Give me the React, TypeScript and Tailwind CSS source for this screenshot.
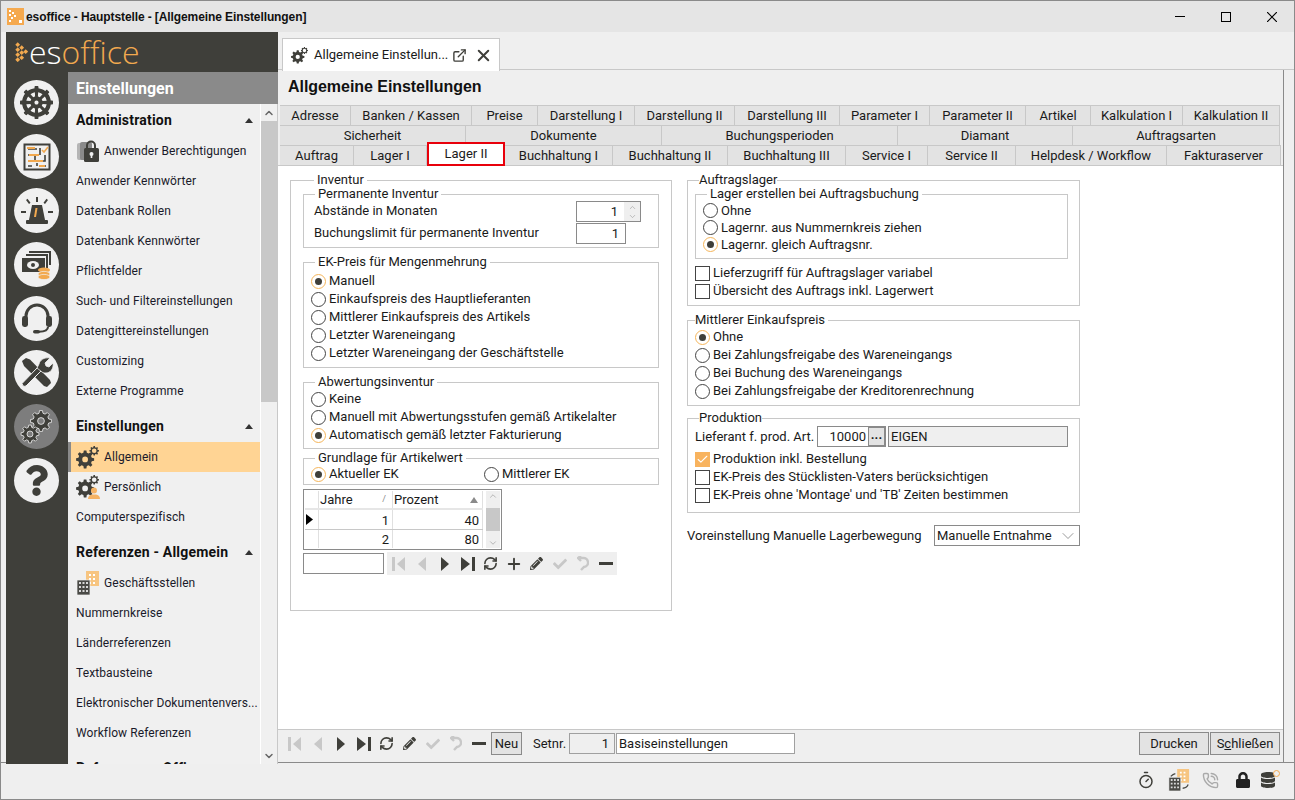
import { ReactNode } from "react";
import { Check, ChevronDown, ChevronUp, ExternalLink, PhoneCall, Plus, RefreshCw, Timer, X } from "lucide-react";
import { FaDatabase, FaDharmachakra, FaLock, FaPencilAlt, FaQuestion, FaCheck } from "react-icons/fa";

const DARK = "#3f3f3a";

// Zahnrad als Pfad, Zähne werden gerechnet
function gearPath(cx: number, cy: number, r: number, teeth: number, hole: number) {
  const pts: string[] = [];
  const inner = r * 0.76;
  const step = (Math.PI * 2) / teeth;
  for (let i = 0; i < teeth; i++) {
    const a = i * step;
    const p = (rad: number, ang: number) => `${(cx + rad * Math.cos(ang)).toFixed(2)} ${(cy + rad * Math.sin(ang)).toFixed(2)}`;
    pts.push(`${i === 0 ? "M" : "L"}${p(inner, a - step * 0.32)}`);
    pts.push(`L${p(r, a - step * 0.18)}`);
    pts.push(`L${p(r, a + step * 0.18)}`);
    pts.push(`L${p(inner, a + step * 0.32)}`);
  }
  pts.push("Z");
  pts.push(`M${cx + hole} ${cy}a${hole} ${hole} 0 1 0 ${-hole * 2} 0a${hole} ${hole} 0 1 0 ${hole * 2} 0Z`);
  return pts.join("");
}

function GearPair({ size, color = DARK }: { size: number; color?: string }) {
  return (
    <svg width={size} height={size} viewBox="0 0 24 24">
      <path d={gearPath(9.5, 14, 9.5, 8, 3)} fill={color} fillRule="evenodd" />
      <path d={gearPath(19, 5, 5, 8, 2.4)} fill={color} fillRule="evenodd" />
    </svg>
  );
}

function ActiveGears() {
  return (
    <svg width="34" height="34" viewBox="0 0 34 34">
      <path d={gearPath(21, 11, 10.5, 8, 3.4)} fill={DARK} stroke="#f0f0f0" strokeWidth="0.8" fillRule="evenodd" />
      <path d={gearPath(10, 24, 9, 8, 3)} fill={DARK} stroke="#f0f0f0" strokeWidth="0.8" fillRule="evenodd" />
    </svg>
  );
}

function WindowIcon() {
  return (
    <div className="w-[17px] h-[17px] bg-[#f5a94e] flex items-center justify-center">
      <svg width="15" height="15" viewBox="0 0 15 15" fill="#fff">
        <rect x="1" y="1" width="2" height="2" />
        <rect x="4" y="3" width="2" height="2" />
        <rect x="1" y="5" width="2" height="2" />
        <rect x="6" y="6" width="2" height="2" />
        <rect x="3" y="8" width="2" height="2" />
        <rect x="1" y="11" width="2" height="2" />
        <rect x="11" y="11" width="3" height="3" />
      </svg>
    </div>
  );
}

function LogoMark() {
  return (
    <svg width="13" height="20" viewBox="0 0 13 20" fill="#f2a94f">
      {[[1, 1], [1, 6], [5, 4], [9, 8], [5, 9], [1, 11], [5, 14], [1, 16]].map(([x, y], i) => (
        <rect key={i} x={x} y={y} width="3.4" height="3.4" transform={`rotate(45 ${x + 1.7} ${y + 1.7})`} />
      ))}
    </svg>
  );
}

function PlanIcon() {
  return (
    <svg width="28" height="28" viewBox="0 0 28 28">
      <rect x="1.5" y="1.5" width="25" height="25" fill="none" stroke={DARK} strokeWidth="2" />
      <path d="M5 6h9M5 12h7v6M12 18H5M5 23h4M17 5v7M22 12v6H16M20 23h3M14 23v-3" stroke={DARK} strokeWidth="1.6" fill="none" />
      <path d="M4 5h8M6 12h10M5 18h15M16 23h6" stroke="#f2a94f" strokeWidth="2" fill="none" />
      <path d="M19 7l2 2 4-5" stroke="#f2a94f" strokeWidth="1.6" fill="none" />
    </svg>
  );
}

function SirenIcon() {
  return (
    <svg width="32" height="30" viewBox="0 0 32 30" fill={DARK}>
      <path d="M11 9h10l3 15H8z" />
      <path d="M14.5 12h2l-1.5 9h-2z" fill="#f2a94f" />
      <rect x="5" y="24" width="22" height="4" rx="1" />
      <path d="M15 1h2v5h-2zM5 4l1.5-1.2 3 4L8 8zM27 4l-1.5-1.2-3 4L24 8zM0 15h5v2H0zM27 15h5v2h-5z" />
    </svg>
  );
}

function MoneyIcon() {
  return (
    <svg width="32" height="30" viewBox="0 0 32 30">
      <path d="M8 1h22v14h-2V3H8zM5 4h22v14h-2V6H5z" fill={DARK} />
      <rect x="1" y="8" width="23" height="14" fill={DARK} />
      <ellipse cx="12" cy="15" rx="6" ry="4" fill="#f0f0f0" />
      <circle cx="12" cy="15" r="2" fill={DARK} />
      <ellipse cx="23" cy="20" rx="6" ry="2.6" fill="#f2a94f" />
      <ellipse cx="23" cy="24" rx="6" ry="2.6" fill="#f2a94f" stroke="#f0f0f0" strokeWidth="0.7" />
      <ellipse cx="23" cy="27" rx="6" ry="2.6" fill="#f2a94f" stroke="#f0f0f0" strokeWidth="0.7" />
    </svg>
  );
}

function HeadsetIcon() {
  return (
    <svg width="32" height="32" viewBox="0 0 32 32" fill="none">
      <path d="M5 16v-3a11 11 0 0 1 22 0v3" stroke={DARK} strokeWidth="3" />
      <rect x="1" y="13" width="6" height="11" rx="2.4" fill={DARK} />
      <rect x="25" y="13" width="6" height="11" rx="2.4" fill={DARK} />
      <path d="M27 24c0 3-3 4.6-9 4.8" stroke={DARK} strokeWidth="2" />
      <rect x="12" y="27" width="7" height="3.6" rx="1.8" fill={DARK} />
    </svg>
  );
}

function ToolsIcon() {
  return (
    <svg width="34" height="34" viewBox="0 0 34 34" fill={DARK}>
      <path d="M2 5l4-3 4 1.500L30 24l1 3-4 4-3-1L4 10z" />
      <path d="M22 14L6 30a2.500 2.500 0 0 1-3.500-1l-.5-1.500L18 11z" stroke="#f0f0f0" strokeWidth="1" />
      <path d="M19 8c1-4 5-7 11-6l-5 5 1 3 3 1 4-4c1 6-3 10-7 10-2 0-3.500-.5-4-1l-5-4c.5-1 1.500-3 2-4z" stroke="#f0f0f0" strokeWidth="0.8" />
    </svg>
  );
}

function RoundButton({ active, children }: { active?: boolean; children: ReactNode }) {
  return (
    <div className={active ? "w-[45px] h-[45px] rounded-full bg-[#7d7d7d] flex items-center justify-center" : "w-[45px] h-[45px] rounded-full bg-[#f0f0f0] flex items-center justify-center"}>
      {children}
    </div>
  );
}

function LockStack() {
  return (
    <svg width="24" height="24" viewBox="0 0 24 24">
      <rect x="1" y="4" width="12" height="17" rx="2" fill="#b5b5b5" />
      <rect x="4" y="3" width="12" height="18" rx="2" fill="#8a8a8a" />
      <path d="M12 8V5.500a4 4 0 0 1 8 0V8" fill="none" stroke={DARK} strokeWidth="2" transform="translate(-1 1)" />
      <rect x="8" y="9" width="15" height="14" rx="1.500" fill={DARK} />
      <circle cx="15.500" cy="15" r="2" fill="#f0f0f0" />
      <rect x="14.700" y="15" width="1.600" height="4" fill="#f0f0f0" />
    </svg>
  );
}

function GearPerson() {
  return (
    <div className="relative w-[24px] h-[24px]">
      <GearPair size={23} />
      <svg className="absolute right-[-1px] bottom-0" width="14" height="12" viewBox="0 0 14 12" fill="#f5b263">
        <circle cx="7" cy="3.400" r="3" />
        <path d="M1 12c0-3 2-4 4-4.500h4c2 .5 4 1.500 4 4.500z" />
      </svg>
    </div>
  );
}

function Buildings({ small }: { small?: boolean }) {
  return (
    <svg width={small ? 22 : 24} height={small ? 22 : 24} viewBox="0 0 24 24">
      <rect x="10" y="0" width="13" height="15" fill="#f7c581" />
      <path d="M13 3h2v2h-2zM17 3h2v2h-2zM13 7h2v2h-2zM17 7h2v2h-2zM13 11h2v2h-2zM17 11h2v2h-2z" fill="#fff" />
      <rect x="1" y="9" width="13" height="15" fill="#4a4a46" stroke="#f0f0f0" strokeWidth="0.7" />
      <path d="M3 11h2v2H3zM6.500 11h2v2h-2zM10 11h2v2h-2zM3 15h2v2H3zM6.500 15h2v2h-2zM10 15h2v2h-2zM3 19h2v2H3zM6.500 19h2v2h-2zM10 19h2v2h-2z" fill="#d8d8d8" />
      {small && <path d="M16 21c3 0 5-1.500 6-4M8 5c-2 .5-4 2-5 3" fill="none" stroke="#4a4a46" strokeWidth="1.400" />}
    </svg>
  );
}

function MenuItem({ label, icon, active }: { label: string; icon?: ReactNode; active?: boolean }) {
  return (
    <div className={active ? "h-[30px] flex items-center bg-[#ffd494] border-l-[3px] border-[#8a8a8a] pl-[5px]" : "h-[30px] flex items-center pl-[8px]"}>
      {icon && <div className="w-[28px] flex items-center">{icon}</div>}
      <span className="text-[12px] text-[#1a1a2a] whitespace-nowrap tracking-[0.1px]">{label}</span>
    </div>
  );
}

function MenuSection({ label, top }: { label: string; top?: boolean }) {
  return (
    <div className={top ? "h-[32px] flex items-center justify-between pl-[8px] pr-[7px]" : "h-[32px] mt-[4px] flex items-center justify-between pl-[8px] pr-[7px]"}>
      <span className="text-[14px] font-bold text-[#111] whitespace-nowrap tracking-[0.2px]">{label}</span>
      <svg width="8" height="5" viewBox="0 0 8 5" fill="#333"><polygon points="4,0 8,5 0,5" /></svg>
    </div>
  );
}

function Sidebar() {
  return (
    <aside className="relative z-10 -mb-[2px] w-[272px] shrink-0 bg-[#3f3f3a] flex flex-col">
      <div className="h-[40px] flex items-center pl-[9px] gap-[1px]">
        <LogoMark />
        <span className="text-[32px] font-light leading-none [font-family:'Open_Sans',sans-serif]">
          <span className="text-white">es</span>
          <span className="text-[#f2a94f]">office</span>
        </span>
      </div>
      <div className="flex flex-1 min-h-0">
        <div className="w-[62px] shrink-0 pl-[8px] pt-[8px] flex flex-col gap-[9px]">
          <RoundButton><FaDharmachakra size={33} color={DARK} /></RoundButton>
          <RoundButton><PlanIcon /></RoundButton>
          <RoundButton><SirenIcon /></RoundButton>
          <RoundButton><MoneyIcon /></RoundButton>
          <RoundButton><HeadsetIcon /></RoundButton>
          <RoundButton><ToolsIcon /></RoundButton>
          <RoundButton active><ActiveGears /></RoundButton>
          <RoundButton><FaQuestion size={31} color={DARK} /></RoundButton>
        </div>
        <div className="flex-1 flex flex-col min-w-0">
          <div className="h-[32px] bg-[#8a8a8a] flex items-center pl-[8px] pt-[1px] text-[16px] font-bold text-white">Einstellungen</div>
          <div className="flex-1 min-h-0 flex bg-[#f0f0f0] border-r border-[#c8c8c8]">
            <div className="w-[193px] border-r border-white overflow-hidden">
              <MenuSection top label="Administration" />
              <MenuItem label="Anwender Berechtigungen" icon={<LockStack />} />
              <MenuItem label="Anwender Kennwörter" />
              <MenuItem label="Datenbank Rollen" />
              <MenuItem label="Datenbank Kennwörter" />
              <MenuItem label="Pflichtfelder" />
              <MenuItem label="Such- und Filtereinstellungen" />
              <MenuItem label="Datengittereinstellungen" />
              <MenuItem label="Customizing" />
              <MenuItem label="Externe Programme" />
              <MenuSection label="Einstellungen" />
              <MenuItem active label="Allgemein" icon={<GearPair size={23} />} />
              <MenuItem label="Persönlich" icon={<GearPerson />} />
              <MenuItem label="Computerspezifisch" />
              <MenuSection label="Referenzen - Allgemein" />
              <MenuItem label="Geschäftsstellen" icon={<Buildings />} />
              <MenuItem label="Nummernkreise" />
              <MenuItem label="Länderreferenzen" />
              <MenuItem label="Textbausteine" />
              <MenuItem label="Elektronischer Dokumentenvers..." />
              <MenuItem label="Workflow Referenzen" />
              <MenuSection label="Referenzen - Office" />
            </div>
            <div className="w-[16px] flex flex-col items-center">
              <div className="h-[17px] flex items-center"><ChevronUp size={12} strokeWidth={3} color="#666" /></div>
              <div className="w-[16px] h-[281px] bg-[#c8c8c8]" />
              <div className="flex-1" />
              <div className="h-[17px] flex items-center"><ChevronDown size={12} strokeWidth={3} color="#666" /></div>
            </div>
          </div>
        </div>
      </div>
    </aside>
  );
}

type Tab = { label: string; w: string; selected?: boolean };

const tabRows: Tab[][] = [
  [
    { label: "Adresse", w: "w-[71px]" },
    { label: "Banken / Kassen", w: "w-[121px]" },
    { label: "Preise", w: "w-[66px]" },
    { label: "Darstellung I", w: "w-[97px]" },
    { label: "Darstellung II", w: "w-[100px]" },
    { label: "Darstellung III", w: "w-[105px]" },
    { label: "Parameter I", w: "w-[90px]" },
    { label: "Parameter II", w: "w-[96px]" },
    { label: "Artikel", w: "w-[65px]" },
    { label: "Kalkulation I", w: "w-[92px]" },
    { label: "Kalkulation II", w: "w-[97px]" },
  ],
  [
    { label: "Sicherheit", w: "w-[186px]" },
    { label: "Dokumente", w: "w-[196px]" },
    { label: "Buchungsperioden", w: "w-[236px]" },
    { label: "Diamant", w: "w-[175px]" },
    { label: "Auftragsarten", w: "w-[207px]" },
  ],
  [
    { label: "Auftrag", w: "w-[74px]" },
    { label: "Lager I", w: "w-[73px]" },
    { label: "Lager II", w: "w-[78px]", selected: true },
    { label: "Buchhaltung I", w: "w-[108px]" },
    { label: "Buchhaltung II", w: "w-[115px]" },
    { label: "Buchhaltung III", w: "w-[118px]" },
    { label: "Service I", w: "w-[82px]" },
    { label: "Service II", w: "w-[88px]" },
    { label: "Helpdesk / Workflow", w: "w-[151px]" },
    { label: "Fakturaserver", w: "w-[114px]" },
  ],
];

function TabRows() {
  return (
    <div className="pl-[2px] pr-[2px]">
      {tabRows.map((row, i) => (
        <div key={i} className="flex h-[20px]">
          {row.map((t) =>
            t.selected ? (
              <div key={t.label} className={`${t.w} relative z-10 h-[24px] -mt-[3px] bg-white border-2 border-[#e8000b] flex items-center justify-center text-[13px] text-[#1a1a1a]`}>
                {t.label}
              </div>
            ) : (
              <div key={t.label} className={`${t.w} bg-[#e3e3e3] border-t border-r border-[#c8c8c8] flex items-center justify-center text-[13px] text-[#1a1a1a] whitespace-nowrap`}>
                {t.label}
              </div>
            )
          )}
        </div>
      ))}
    </div>
  );
}

function Group({ title, className, legendClass, children }: { title: string; className?: string; legendClass?: string; children: ReactNode }) {
  return (
    <fieldset className={`border border-[#c8c8c8] min-w-0 ${className ?? ""}`}>
      <legend className={`leading-[14px] text-[13px] text-[#1a1a1a] whitespace-nowrap ${legendClass ?? "ml-[11px] px-[3px]"}`}>{title}</legend>
      {children}
    </fieldset>
  );
}

function Radio({ label, on, rowClass }: { label: string; on?: boolean; rowClass?: string }) {
  return (
    <div className={`flex items-center gap-[3px] text-[13px] text-[#1a1a1a] whitespace-nowrap ${rowClass ?? "h-[18px]"}`}>
      {on ? (
        <span className="w-[15px] h-[15px] rounded-full border border-[#f5b55a] bg-white flex items-center justify-center">
          <span className="w-[7px] h-[7px] rounded-full bg-[#3f3f3a]" />
        </span>
      ) : (
        <span className="w-[15px] h-[15px] rounded-full border border-[#444] bg-white" />
      )}
      {label}
    </div>
  );
}

function CheckRow({ label, on }: { label: string; on?: boolean }) {
  return (
    <div className="h-[18px] flex items-center gap-[3px] text-[13px] text-[#1a1a1a] whitespace-nowrap">
      {on ? (
        <span className="w-[15px] h-[15px] bg-[#f8b35e] flex items-center justify-center">
          <Check size={13} color="#fff" strokeWidth={2} />
        </span>
      ) : (
        <span className="w-[15px] h-[15px] border border-[#444] bg-white" />
      )}
      {label}
    </div>
  );
}

function NavIcon({ kind, off }: { kind: string; off?: boolean }) {
  const c = off ? "#c8c8c8" : DARK;
  return (
    <div className="w-[23px] h-[22px] flex items-center justify-center">
      {kind === "first" && <svg width="14" height="14" viewBox="0 0 14 14" fill={c}><rect x="0" y="0" width="3" height="14" /><polygon points="13,0 13,14 5,7" /></svg>}
      {kind === "prev" && <svg width="8" height="14" viewBox="0 0 8 14" fill={c}><polygon points="8,0 8,14 0,7" /></svg>}
      {kind === "next" && <svg width="8" height="14" viewBox="0 0 8 14" fill={c}><polygon points="0,0 8,7 0,14" /></svg>}
      {kind === "last" && <svg width="14" height="14" viewBox="0 0 14 14" fill={c}><polygon points="0,0 9,7 0,14" /><rect x="11" y="0" width="3" height="14" /></svg>}
      {kind === "refresh" && <RefreshCw size={15} strokeWidth={2.6} color={c} />}
      {kind === "plus" && <Plus size={18} strokeWidth={2.5} color={c} />}
      {kind === "edit" && <FaPencilAlt size={13} color={c} />}
      {kind === "check" && <FaCheck size={14} color={c} />}
      {kind === "undo" && <svg width="12" height="15" viewBox="0 0 12 15" fill="none" stroke={c} strokeWidth="2.400"><path d="M1 2h5a4.500 4.500 0 0 1 1 9l-3 3" /><path d="M4 0L1 2l3 3" /></svg>}
      {kind === "minus" && <svg width="14" height="3" viewBox="0 0 14 3" fill={c}><rect width="14" height="3" /></svg>}
    </div>
  );
}

function Inventur() {
  return (
    <Group title="Inventur" className="w-[382px] h-[438px] shrink-0 px-[12px]">
      <Group title="Permanente Inventur">
        <div className="pb-[3px] pl-[10px] pr-[17px]">
          <div className="flex items-center justify-between h-[21px] text-[13px] text-[#1a1a1a]">
            <span className="-mt-[2px]">Abstände in Monaten</span>
            <div className="w-[65px] h-[21px] border border-[#8a8a8a] flex items-center">
              <span className="flex-1 text-right pr-[6px]">1</span>
              <div className="w-[16px] h-full bg-[#efefef] flex flex-col items-center justify-center">
                <ChevronUp size={9} color="#aaa" />
                <ChevronDown size={9} color="#aaa" />
              </div>
            </div>
          </div>
          <div className="flex items-center justify-between h-[21px] mt-[1px] text-[13px] text-[#1a1a1a]">
            <span className="-mt-[2px]">Buchungslimit für permanente Inventur</span>
            <div className="flex w-[65px]">
              <div className="w-[50px] h-[21px] border border-[#8a8a8a] text-right pr-[6px] leading-[19px]">1</div>
            </div>
          </div>
        </div>
      </Group>
      <Group title="EK-Preis für Mengenmehrung" className="mt-[7px]">
        <div className="pt-[3px] pb-[5px] pl-[7px]">
          <Radio on label="Manuell" />
          <Radio label="Einkaufspreis des Hauptlieferanten" />
          <Radio label="Mittlerer Einkaufspreis des Artikels" />
          <Radio label="Letzter Wareneingang" />
          <Radio label="Letzter Wareneingang der Geschäftstelle" />
        </div>
      </Group>
      <Group title="Abwertungsinventur" className="mt-[7px]">
        <div className="pt-[1px] pb-[4px] pl-[7px]">
          <Radio label="Keine" />
          <Radio label="Manuell mit Abwertungsstufen gemäß Artikelalter" />
          <Radio on label="Automatisch gemäß letzter Fakturierung" />
        </div>
      </Group>
      <Group title="Grundlage für Artikelwert" className="mt-[2px]">
        <div className="flex pl-[7px] pb-[1px]">
          <div className="w-[173px]"><Radio on label="Aktueller EK" /></div>
          <Radio label="Mittlerer EK" />
        </div>
      </Group>
      <div className="mt-[4px] w-[199px] h-[61px] border border-[#8a8a8a] flex text-[13px] text-[#1a1a1a] p-[1px]">
        <div className="w-[178px]">
          <div className="flex h-[19px] border-b-2 border-[#e6e6e6]">
            <div className="w-[13px]" />
            <div className="w-[75px] border-x border-[#e0e0e0] pl-[1px] flex items-center justify-between pr-[6px]">Jahre<span className="text-[9px] text-[#888]">/</span></div>
            <div className="w-[90px] border-r border-[#e0e0e0] pl-[1px] flex items-center justify-between pr-[4px]">
              Prozent
              <svg width="8" height="6" viewBox="0 0 8 6" fill="#8a8a8a"><polygon points="4,0 8,6 0,6" /></svg>
            </div>
          </div>
          <div className="flex h-[20px] border-b border-[#c8c8c8]">
            <div className="w-[13px] flex items-center pl-[1px]">
              <svg width="7" height="11" viewBox="0 0 7 11" fill="#000"><polygon points="0,0 7,5.500 0,11" /></svg>
            </div>
            <div className="w-[75px] border-x border-[#e0e0e0] text-right pr-[3px] leading-[21px]">1</div>
            <div className="w-[90px] border-r border-[#e0e0e0] text-right pr-[3px] leading-[21px]">40</div>
          </div>
          <div className="flex h-[18px]">
            <div className="w-[13px]" />
            <div className="w-[75px] border-x border-[#e0e0e0] text-right pr-[3px] leading-[19px]">2</div>
            <div className="w-[90px] border-r border-[#e0e0e0] text-right pr-[3px] leading-[19px]">80</div>
          </div>
        </div>
        <div className="ml-[3px] w-[16px] bg-[#efefef] flex flex-col items-center justify-between">
          <ChevronUp size={10} color="#aaa" />
          <div className="w-full h-[23px] bg-[#c8c8c8]" />
          <ChevronDown size={10} color="#aaa" />
        </div>
      </div>
      <div className="flex mt-[2px] items-center">
        <div className="w-[81px] h-[21px] border border-[#8a8a8a]" />
        <div className="ml-[3px] h-[23px] w-[230px] bg-[#efefef] flex items-center">
          <NavIcon kind="first" off />
          <NavIcon kind="prev" off />
          <NavIcon kind="next" />
          <NavIcon kind="last" />
          <NavIcon kind="refresh" />
          <NavIcon kind="plus" />
          <NavIcon kind="edit" />
          <NavIcon kind="check" off />
          <NavIcon kind="undo" off />
          <NavIcon kind="minus" />
        </div>
      </div>
    </Group>
  );
}

function RightColumn() {
  return (
    <div className="w-[393px] shrink-0">
      <Group title="Auftragslager" legendClass="ml-[11px]">
        <div className="pl-[7px] pr-[11px]">
          <Group title="Lager erstellen bei Auftragsbuchung">
            <div className="pt-[1px] pb-[5px] pl-[7px]">
              <Radio rowClass="h-[17px]" label="Ohne" />
              <Radio rowClass="h-[17px]" label="Lagernr. aus Nummernkreis ziehen" />
              <Radio rowClass="h-[17px]" on label="Lagernr. gleich Auftragsnr." />
            </div>
          </Group>
          <div className="mt-[5px] pb-[5px]">
            <CheckRow label="Lieferzugriff für Auftragslager variabel" />
            <CheckRow label="Übersicht des Auftrags inkl. Lagerwert" />
          </div>
        </div>
      </Group>
      <Group title="Mittlerer Einkaufspreis" legendClass="ml-[7px] pr-[3px]" className="mt-[7px]">
        <div className="pl-[7px] pt-[1px] pb-[5px]">
          <Radio on label="Ohne" />
          <Radio label="Bei Zahlungsfreigabe des Wareneingangs" />
          <Radio label="Bei Buchung des Wareneingangs" />
          <Radio label="Bei Zahlungsfreigabe der Kreditorenrechnung" />
        </div>
      </Group>
      <Group title="Produktion" legendClass="ml-[11px]" className="mt-[5px]">
        <div className="pl-[7px] pr-[11px] pt-[1px] pb-[8px]">
          <div className="flex items-center h-[21px] text-[13px] text-[#1a1a1a]">
            <span className="w-[122px]">Lieferant f. prod. Art.</span>
            <div className="w-[69px] h-[21px] border border-[#8a8a8a] flex items-center">
              <span className="flex-1 text-right pr-[2px]">10000</span>
              <div className="w-[17px] h-[19px] bg-[#e3e3e3] border border-[#8a8a8a] flex items-center justify-center font-bold leading-none pb-[5px]">...</div>
            </div>
            <div className="ml-[2px] flex-1 h-[21px] bg-[#efefef] border border-[#8a8a8a] pl-[2px] leading-[19px]">EIGEN</div>
          </div>
          <div className="mt-[3px]">
            <CheckRow on label="Produktion inkl. Bestellung" />
            <CheckRow label="EK-Preis des Stücklisten-Vaters berücksichtigen" />
            <CheckRow label="EK-Preis ohne 'Montage' und 'TB' Zeiten bestimmen" />
          </div>
        </div>
      </Group>
      <div className="mt-[12px] flex items-center justify-between text-[13px] text-[#1a1a1a]">
        Voreinstellung Manuelle Lagerbewegung
        <div className="w-[146px] h-[21px] border border-[#8a8a8a] flex items-center justify-between pl-[2px] pr-[1px]">
          Manuelle Entnahme
          <ChevronDown size={20} strokeWidth={0.8} color="#666" />
        </div>
      </div>
    </div>
  );
}

function BottomBar() {
  return (
    <div className="h-[32px] shrink-0 pb-[5px] flex items-center pl-[5px] pr-[3px] text-[13px] text-[#1a1a1a]">
      <NavIcon kind="first" off />
      <NavIcon kind="prev" off />
      <NavIcon kind="next" />
      <NavIcon kind="last" />
      <NavIcon kind="refresh" />
      <NavIcon kind="edit" />
      <NavIcon kind="check" off />
      <NavIcon kind="undo" off />
      <NavIcon kind="minus" />
      <div className="ml-[1px] w-[31px] h-[23px] bg-[#e3e3e3] border border-[#8a8a8a] flex items-center justify-center">Neu</div>
      <span className="ml-[11px] w-[36px]">Setnr.</span>
      <div className="w-[46px] h-[21px] border border-[#a0a0a0] bg-[#efefef] text-right pr-[5px] leading-[19px]">1</div>
      <div className="ml-[1px] w-[179px] h-[21px] border border-[#a0a0a0] bg-white pl-[2px] leading-[19px]">Basiseinstellungen</div>
      <div className="flex-1" />
      <div className="w-[70px] h-[23px] bg-[#e3e3e3] border border-[#8a8a8a] flex items-center justify-center">Drucken</div>
      <div className="ml-[1px] w-[70px] h-[23px] bg-[#e3e3e3] border border-[#8a8a8a] flex items-center justify-center">
        <span>S<u>c</u>hließen</span>
      </div>
    </div>
  );
}

export default function App() {
  return (
    <div className="w-[1295px] h-[800px] bg-[#efefef] border border-[#8a8a8a] flex flex-col overflow-hidden [font-family:Roboto,sans-serif]">
      {/* Titelleiste */}
      <div className="h-[31px] shrink-0 bg-[#e5e5e5] flex items-center pl-[6px]">
        <WindowIcon />
        <span className="ml-[2px] text-[12px] tracking-[-0.1px] font-bold text-[#111] [font-family:'Liberation_Sans',sans-serif]">esoffice - Hauptstelle - [Allgemeine Einstellungen]</span>
        <div className="flex-1" />
        <div className="flex items-center gap-[36px] pr-[17px]">
          <div className="w-[10px] h-[1px] bg-black" />
          <div className="w-[10px] h-[10px] border border-black" />
          <svg width="10" height="10" viewBox="0 0 10 10" stroke="#000" strokeWidth="1.200"><path d="M0 0l10 10M10 0L0 10" /></svg>
        </div>
      </div>

      <div className="flex-1 min-h-0 flex pl-[5px]">
        <Sidebar />
        <main className="flex-1 min-w-0 flex flex-col">
          {/* Dokument-Tab */}
          <div className="h-[38px] shrink-0 pl-[4px] pt-[6px] border-b border-[#c8c8c8]">
            <div className="w-[218px] h-[33px] bg-white border-x border-t border-[#c8c8c8] flex items-center pl-[8px] text-[13px] text-[#1a1a1a]">
              <GearPair size={17} />
              <span className="ml-[6px] w-[138px] whitespace-nowrap">Allgemeine Einstellun...</span>
              <ExternalLink size={15} color={DARK} strokeWidth={2.2} />
              <X size={19} color={DARK} strokeWidth={2.5} className="ml-[7px]" />
            </div>
          </div>
          <div className="flex-1 min-h-0 flex flex-col mr-[10px] border-r border-[#8a8a8a]">
            <div className="h-[35px] shrink-0 flex items-center pl-[10px] pb-[2px] text-[16px] tracking-[-0.05px] font-bold text-[#111] [font-family:'Liberation_Sans',sans-serif]">Allgemeine Einstellungen</div>
            <TabRows />
            <div className="flex-1 min-h-0 bg-white pl-[12px] pt-[7px] flex gap-[15px] border-t border-[#c8c8c8] border-b">
              <Inventur />
              <RightColumn />
            </div>
            <BottomBar />
          </div>
        </main>
      </div>

      {/* Statusleiste */}
      <div className="h-[37px] shrink-0 border-t border-[#8a8a8a] flex items-center justify-end pr-[18px] pb-[2px]">
        <Timer size={18} color={DARK} strokeWidth={2} />
        <div className="ml-[13px]"><Buildings small /></div>
        <div className="ml-[12px]"><PhoneCall size={17} color="#aaa" /></div>
        <div className="ml-[16px]"><FaLock size={16} color="#222" /></div>
        <div className="relative ml-[9px]">
          <FaDatabase size={16} color={DARK} />
          <span className="absolute -top-[2px] -right-[4px] w-[7px] h-[7px] rounded-full border border-[#f2a94f] bg-[#efefef]" />
        </div>
      </div>
    </div>
  );
}
